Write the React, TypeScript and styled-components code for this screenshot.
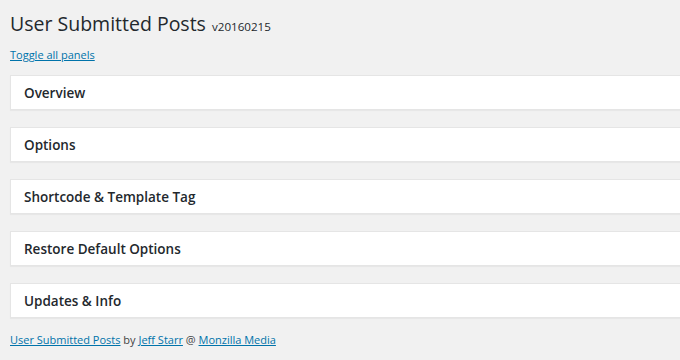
import { createGlobalStyle, styled } from 'styled-components';

const GlobalStyle = createGlobalStyle`
  html, body {
    margin: 0;
    padding: 0;
    background: #f1f1f1;
    overflow: hidden;
  }
  body {
    font-family: 'Open Sans', 'Liberation Sans', sans-serif;
    color: #23282d;
  }
`;

const Wrap = styled.div`
  width: 700px;
  padding: 12px 0 0 10px;
  box-sizing: border-box;
`;

const Title = styled.h1`
  margin: 0;
  font-size: 19.5px;
  font-weight: 400;
  line-height: 24px;
  color: #23282d;
`;

const Version = styled.small`
  font-size: 11.6px;
  line-height: 1;
  margin-left: 1px;
`;

const Link = styled.a`
  color: #0073aa;
  text-decoration: underline;
`;

const ToggleRow = styled.div`
  margin-top: 11px;
  font-size: 11px;
  line-height: 16px;
`;

const Panels = styled.div`
  margin-top: 12px;
  display: flex;
  flex-direction: column;
  gap: 17px;
`;

const Panel = styled.div`
  height: 35px;
  box-sizing: border-box;
  background: #fff;
  border: 1px solid #e5e5e5;
  box-shadow: 0 1px 1px rgba(0, 0, 0, 0.04);
  display: flex;
  align-items: center;
  padding-left: 13px;
  font-size: 13.5px;
  font-weight: 600;
`;

const Footer = styled.div`
  margin-top: 14px;
  line-height: 16px;
  font-size: 11px;
  color: #444;
`;

const panels = [
  'Overview',
  'Options',
  'Shortcode & Template Tag',
  'Restore Default Options',
  'Updates & Info',
];

export default function App() {
  return (
    <>
      <GlobalStyle />
      <Wrap>
        <Title>
          User Submitted Posts <Version>v20160215</Version>
        </Title>
        <ToggleRow>
          <Link href="#">Toggle all panels</Link>
        </ToggleRow>
        <Panels>
          {panels.map((p) => (
            <Panel key={p}>{p}</Panel>
          ))}
        </Panels>
        <Footer>
          <Link href="#">User Submitted Posts</Link> by <Link href="#">Jeff Starr</Link> @{' '}
          <Link href="#">Monzilla Media</Link>
        </Footer>
      </Wrap>
    </>
  );
}
